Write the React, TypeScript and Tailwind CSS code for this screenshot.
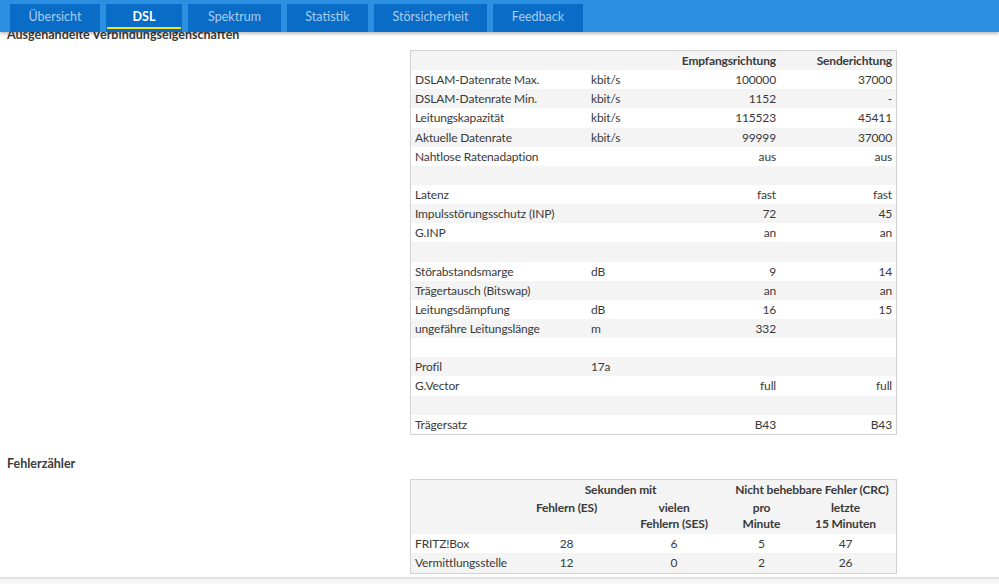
import React from "react";

const tabs = [
  { name: "Übersicht", w: "w-[90px]" },
  { name: "DSL", w: "w-[76px]", active: true },
  { name: "Spektrum", w: "w-[93px]" },
  { name: "Statistik", w: "w-[81px]" },
  { name: "Störsicherheit", w: "w-[113px]" },
  { name: "Feedback", w: "w-[90px]" },
];

type Row = [string, string, string, string];
const rows: Row[] = [
  ["DSLAM-Datenrate Max.", "kbit/s", "100000", "37000"],
  ["DSLAM-Datenrate Min.", "kbit/s", "1152", "-"],
  ["Leitungskapazität", "kbit/s", "115523", "45411"],
  ["Aktuelle Datenrate", "kbit/s", "99999", "37000"],
  ["Nahtlose Ratenadaption", "", "aus", "aus"],
  ["", "", "", ""],
  ["Latenz", "", "fast", "fast"],
  ["Impulsstörungsschutz (INP)", "", "72", "45"],
  ["G.INP", "", "an", "an"],
  ["", "", "", ""],
  ["Störabstandsmarge", "dB", "9", "14"],
  ["Trägertausch (Bitswap)", "", "an", "an"],
  ["Leitungsdämpfung", "dB", "16", "15"],
  ["ungefähre Leitungslänge", "m", "332", ""],
  ["", "", "", ""],
  ["Profil", "17a", "", ""],
  ["G.Vector", "", "full", "full"],
  ["", "", "", ""],
  ["Trägersatz", "", "B43", "B43"],
];

export default function App() {
  return (
    <div
      className="relative w-[999px] h-[584px] overflow-hidden bg-white text-[12px] tracking-[-0.15px] text-[#3a3a3a]"
      style={{ fontFamily: "Lato, 'Open Sans', sans-serif" }}
    >
      {/* content */}
      <div className="pt-[25px]">
        <div className="pl-[7px] h-[19px] leading-[19px] font-bold text-[12.5px] tracking-normal">
          Ausgehandelte Verbindungseigenschaften
        </div>
        <div className="mt-[6px] ml-[410px] w-[487px] border border-[#d2d2d2]">
          <div className="flex h-[19.15px] leading-[19.15px] px-1 bg-[#f4f4f4] font-bold">
            <div className="w-[176px]"></div>
            <div className="w-[90px]"></div>
            <div className="w-[95px] text-right whitespace-nowrap">Empfangsrichtung</div>
            <div className="flex-1 text-right whitespace-nowrap">Senderichtung</div>
          </div>
          {rows.map((r, i) => (
            <div
              key={i}
              className={`flex h-[19.15px] leading-[19.15px] px-1 ${i % 2 === 0 ? "bg-white" : "bg-[#f4f4f4]"}`}
            >
              <div className="w-[176px] whitespace-nowrap">{r[0]}</div>
              <div className="w-[90px]">{r[1]}</div>
              <div className="w-[95px] text-right">{r[2]}</div>
              <div className="flex-1 text-right">{r[3]}</div>
            </div>
          ))}
        </div>

        <div className="mt-[19px] pl-[7px] h-[19px] leading-[19px] font-bold text-[12.5px] tracking-normal">
          Fehlerzähler
        </div>

        <div className="mt-[6px] ml-[410px] w-[487px] border border-[#d2d2d2]">
          <div className="bg-[#f4f4f4] font-bold">
            <div className="flex h-[19px] leading-[19px]">
              <div className="w-[102px]"></div>
              <div className="w-[215px] text-center whitespace-nowrap">Sekunden mit</div>
              <div className="flex-1 text-center whitespace-nowrap">Nicht behebbare Fehler (CRC)</div>
            </div>
            <div className="flex h-[35px] leading-[16px] pt-[1px]">
              <div className="w-[102px]"></div>
              <div className="w-[107px] text-center whitespace-nowrap">Fehlern (ES)</div>
              <div className="w-[108px] text-center whitespace-nowrap">
                vielen
                <br />
                Fehlern (SES)
              </div>
              <div className="w-[67px] text-center whitespace-nowrap">
                pro
                <br />
                Minute
              </div>
              <div className="flex-1 text-center whitespace-nowrap">
                letzte
                <br />
                15 Minuten
              </div>
            </div>
          </div>
          {[
            ["FRITZ!Box", "28", "6", "5", "47"],
            ["Vermittlungsstelle", "12", "0", "2", "26"],
          ].map((r, i) => (
            <div
              key={i}
              className={`flex h-[19.5px] leading-[19.5px] ${i === 0 ? "bg-white" : "bg-[#f4f4f4]"}`}
            >
              <div className="w-[102px] pl-1 whitespace-nowrap">{r[0]}</div>
              <div className="w-[107px] text-center">{r[1]}</div>
              <div className="w-[108px] text-center">{r[2]}</div>
              <div className="w-[67px] text-center">{r[3]}</div>
              <div className="flex-1 text-center">{r[4]}</div>
            </div>
          ))}
        </div>

        <div className="mt-[3px] h-[10px] border-t-2 border-[#e2e2e2] bg-[#f6f6f6]"></div>
      </div>

      {/* fixed nav bar overlaying the scrolled content */}
      <div className="absolute top-0 left-0 right-0 h-[32px] bg-[#2b8fe2] shadow-[0_2px_3px_rgba(0,0,0,0.25)]">
        <div className="flex gap-[6px] pl-[10px] pt-[4px]">
          {tabs.map((t) => (
            <div
              key={t.name}
              className={`relative h-[28px] ${t.w} bg-[#096cc6] text-center leading-[25px] text-[12.5px] tracking-normal ${t.active ? "text-white font-bold" : "text-[#a8cdef]"}`}
            >
              {t.name}
              {t.active && (
                <div className="absolute left-[1px] right-[1px] bottom-[3px] h-[2px] bg-[#f1e21a]"></div>
              )}
            </div>
          ))}
        </div>
      </div>
    </div>
  );
}
